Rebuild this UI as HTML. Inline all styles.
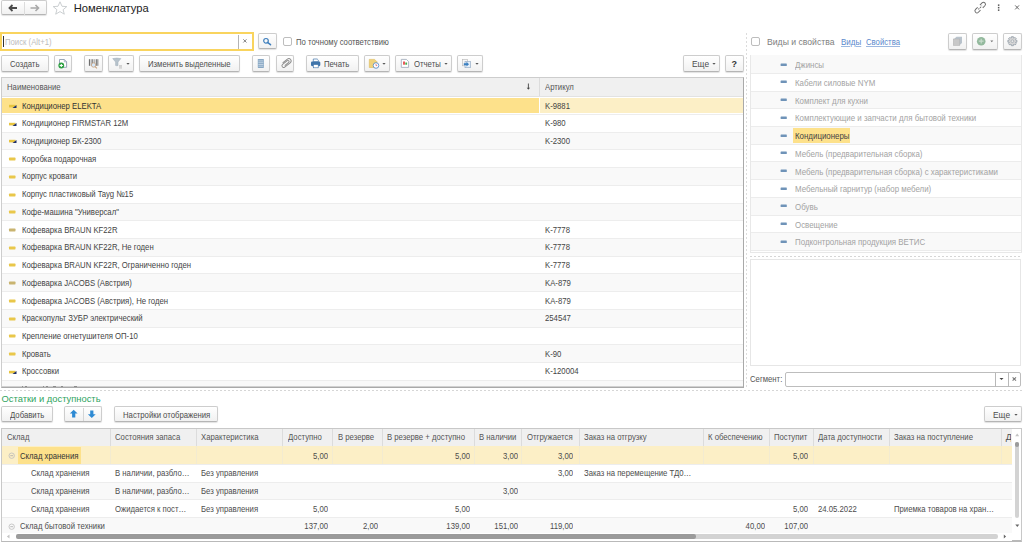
<!DOCTYPE html><html><head><meta charset="utf-8"><style>
html,body{margin:0;padding:0;width:1024px;height:545px;overflow:hidden;background:#fff;font-family:"Liberation Sans", sans-serif;}
.t{position:absolute;white-space:nowrap;}
.b{position:absolute;}
svg{position:absolute;overflow:visible;}
</style></head><body>
<div class="b" style="left:0.9px;top:-0.09999999999999998px;width:45.7px;height:15.1px;box-sizing:border-box;border:1px solid #cdcdcd;border-bottom-color:#b5b5b5;border-radius:2px;background:linear-gradient(#ffffff,#f1f1f1);box-shadow:0 1px 1px rgba(0,0,0,0.12);"></div>
<div class="b" style="left:24px;top:1.5px;width:1px;height:13px;background:#dcdcdc;"></div>
<svg style="left:0;top:0" width="60" height="16"><path d="M9.5 8 L17 8 M12.5 5 L9.5 8 L12.5 11" stroke="#4a4a4a" stroke-width="1.8" fill="none"/><path d="M30.5 8 L38.5 8 M35.5 5 L38.5 8 L35.5 11" stroke="#a8a8a8" stroke-width="1.6" fill="none"/><path d="M60 1.8 L62.0 6.3 L66.8 6.6 L63.1 9.7 L64.3 14.2 L60 11.6 L55.7 14.2 L56.9 9.7 L53.2 6.6 L58.0 6.3 Z" stroke="#c5c9cc" stroke-width="0.9" fill="none" transform="translate(0,0)"/></svg>
<div class="t" style="left:73.7px;top:2.12px;font-size:11.2px;color:#222;letter-spacing:0px;line-height:12px;">Номенклатура</div>
<svg style="left:970px;top:0" width="54" height="16"><g transform="rotate(-45 10.2 7.6)" fill="none" stroke="#6e6e6e" stroke-width="1"><path d="M8.6 5.6 L5.6 5.6 a2 2 0 0 0 0 4 L8.6 9.6"/><path d="M11.8 5.6 L14.8 5.6 a2 2 0 0 1 0 4 L11.8 9.6"/><path d="M7.6 7.6 L12.8 7.6" stroke-dasharray="1.4 0.9"/></g><rect x="27.9" y="4.4" width="1.5" height="1.5" fill="#555"/><rect x="27.9" y="6.9" width="1.5" height="1.5" fill="#555"/><rect x="27.9" y="9.4" width="1.5" height="1.5" fill="#555"/><path d="M45.2 5.4 L49 9.4 M49 5.4 L45.2 9.4" stroke="#6a6a6a" stroke-width="1"/></svg>
<div class="b" style="left:0px;top:32px;width:254px;height:19px;box-sizing:border-box;border:2px solid #f9d45e;background:#fff;"></div>
<div class="b" style="left:3px;top:36px;width:1px;height:11px;background:#333;"></div>
<div class="t" style="left:5px;top:35.88px;font-size:9px;color:#bdbdbd;letter-spacing:0px;line-height:12px;transform:scaleX(0.86);transform-origin:0 0;">Поиск (Alt+1)</div>
<div class="b" style="left:238px;top:35px;width:1px;height:14px;background:#b4b4b4;"></div>
<svg style="left:240px;top:36px" width="10" height="10"><path d="M3.3 3.3 L6.5 6.5 M6.5 3.3 L3.3 6.5" stroke="#777" stroke-width="0.9"/></svg>
<div class="b" style="left:257.7px;top:32.9px;width:18.900000000000034px;height:16.6px;box-sizing:border-box;border:1px solid #cdcdcd;border-bottom-color:#b5b5b5;border-radius:2px;background:linear-gradient(#ffffff,#f1f1f1);box-shadow:0 1px 1px rgba(0,0,0,0.12);"></div>
<svg style="left:258px;top:33px" width="18" height="16"><circle cx="8" cy="7.8" r="2.3" stroke="#3f7fbd" stroke-width="1.2" fill="none"/><path d="M9.8 9.6 L12.5 11.7" stroke="#3f7fbd" stroke-width="1.5" stroke-linecap="round"/></svg>
<div class="b" style="left:283px;top:37.4px;width:9px;height:9px;box-sizing:border-box;border:1px solid #bdbdbd;border-radius:2px;background:#fff;"></div>
<div class="t" style="left:296.2px;top:35.88px;font-size:9px;color:#555;letter-spacing:0px;line-height:12px;transform:scaleX(0.86);transform-origin:0 0;">По точному соответствию</div>
<div class="b" style="left:0.9px;top:54.9px;width:47.7px;height:16.699999999999996px;box-sizing:border-box;border:1px solid #cdcdcd;border-bottom-color:#b5b5b5;border-radius:2px;background:linear-gradient(#ffffff,#f1f1f1);box-shadow:0 1px 1px rgba(0,0,0,0.12);"></div>
<div class="t" style="left:9.5px;top:57.78px;font-size:9px;color:#4d4d4d;letter-spacing:0px;line-height:12px;transform:scaleX(0.86);transform-origin:0 0;">Создать</div>
<div class="b" style="left:53.699999999999996px;top:54.9px;width:18.699999999999996px;height:16.699999999999996px;box-sizing:border-box;border:1px solid #cdcdcd;border-bottom-color:#b5b5b5;border-radius:2px;background:linear-gradient(#ffffff,#f1f1f1);box-shadow:0 1px 1px rgba(0,0,0,0.12);"></div>
<div class="b" style="left:83.9px;top:54.9px;width:19.299999999999983px;height:16.699999999999996px;box-sizing:border-box;border:1px solid #cdcdcd;border-bottom-color:#b5b5b5;border-radius:2px;background:linear-gradient(#ffffff,#f1f1f1);box-shadow:0 1px 1px rgba(0,0,0,0.12);"></div>
<div class="b" style="left:107.80000000000001px;top:54.9px;width:26.19999999999999px;height:16.699999999999996px;box-sizing:border-box;border:1px solid #cdcdcd;border-bottom-color:#b5b5b5;border-radius:2px;background:linear-gradient(#ffffff,#f1f1f1);box-shadow:0 1px 1px rgba(0,0,0,0.12);"></div>
<div class="b" style="left:138.6px;top:54.9px;width:101.4px;height:16.699999999999996px;box-sizing:border-box;border:1px solid #cdcdcd;border-bottom-color:#b5b5b5;border-radius:2px;background:linear-gradient(#ffffff,#f1f1f1);box-shadow:0 1px 1px rgba(0,0,0,0.12);"></div>
<div class="t" style="left:147.8px;top:57.78px;font-size:9px;color:#4d4d4d;letter-spacing:0px;line-height:12px;transform:scaleX(0.86);transform-origin:0 0;">Изменить выделенные</div>
<div class="b" style="left:251.5px;top:54.9px;width:18.80000000000001px;height:16.699999999999996px;box-sizing:border-box;border:1px solid #cdcdcd;border-bottom-color:#b5b5b5;border-radius:2px;background:linear-gradient(#ffffff,#f1f1f1);box-shadow:0 1px 1px rgba(0,0,0,0.12);"></div>
<div class="b" style="left:275.9px;top:54.9px;width:18.300000000000068px;height:16.699999999999996px;box-sizing:border-box;border:1px solid #cdcdcd;border-bottom-color:#b5b5b5;border-radius:2px;background:linear-gradient(#ffffff,#f1f1f1);box-shadow:0 1px 1px rgba(0,0,0,0.12);"></div>
<div class="b" style="left:305.7px;top:54.9px;width:53.200000000000045px;height:16.699999999999996px;box-sizing:border-box;border:1px solid #cdcdcd;border-bottom-color:#b5b5b5;border-radius:2px;background:linear-gradient(#ffffff,#f1f1f1);box-shadow:0 1px 1px rgba(0,0,0,0.12);"></div>
<div class="t" style="left:324px;top:57.78px;font-size:9px;color:#4d4d4d;letter-spacing:0px;line-height:12px;transform:scaleX(0.86);transform-origin:0 0;">Печать</div>
<div class="b" style="left:364.0px;top:54.9px;width:26.100000000000023px;height:16.699999999999996px;box-sizing:border-box;border:1px solid #cdcdcd;border-bottom-color:#b5b5b5;border-radius:2px;background:linear-gradient(#ffffff,#f1f1f1);box-shadow:0 1px 1px rgba(0,0,0,0.12);"></div>
<div class="b" style="left:395.0px;top:54.9px;width:56.900000000000034px;height:16.699999999999996px;box-sizing:border-box;border:1px solid #cdcdcd;border-bottom-color:#b5b5b5;border-radius:2px;background:linear-gradient(#ffffff,#f1f1f1);box-shadow:0 1px 1px rgba(0,0,0,0.12);"></div>
<div class="t" style="left:414px;top:57.78px;font-size:9px;color:#4d4d4d;letter-spacing:0px;line-height:12px;transform:scaleX(0.86);transform-origin:0 0;">Отчеты</div>
<div class="b" style="left:456.5px;top:54.9px;width:26.400000000000034px;height:16.699999999999996px;box-sizing:border-box;border:1px solid #cdcdcd;border-bottom-color:#b5b5b5;border-radius:2px;background:linear-gradient(#ffffff,#f1f1f1);box-shadow:0 1px 1px rgba(0,0,0,0.12);"></div>
<div class="b" style="left:682.6px;top:54.9px;width:37.799999999999955px;height:16.699999999999996px;box-sizing:border-box;border:1px solid #cdcdcd;border-bottom-color:#b5b5b5;border-radius:2px;background:linear-gradient(#ffffff,#f1f1f1);box-shadow:0 1px 1px rgba(0,0,0,0.12);"></div>
<div class="t" style="left:691.8px;top:57.78px;font-size:9px;color:#4d4d4d;letter-spacing:0px;line-height:12px;transform:scaleX(0.93);transform-origin:0 0;">Еще</div>
<div class="b" style="left:725.1px;top:54.9px;width:19.100000000000023px;height:16.699999999999996px;box-sizing:border-box;border:1px solid #cdcdcd;border-bottom-color:#b5b5b5;border-radius:2px;background:linear-gradient(#ffffff,#f1f1f1);box-shadow:0 1px 1px rgba(0,0,0,0.12);"></div>
<div class="t" style="left:731.5px;top:57.88px;font-size:9px;color:#333;letter-spacing:0px;line-height:12px;font-weight:bold;">?</div>
<svg style="left:124.6px;top:62.2px" width="6" height="4"><path d="M1.4 1.1 L4.6 1.1 L3 2.8 Z" fill="#555"/></svg>
<svg style="left:380.6px;top:62.2px" width="6" height="4"><path d="M1.4 1.1 L4.6 1.1 L3 2.8 Z" fill="#555"/></svg>
<svg style="left:442.7px;top:62.2px" width="6" height="4"><path d="M1.4 1.1 L4.6 1.1 L3 2.8 Z" fill="#555"/></svg>
<svg style="left:473.7px;top:62.2px" width="6" height="4"><path d="M1.4 1.1 L4.6 1.1 L3 2.8 Z" fill="#555"/></svg>
<svg style="left:711.2px;top:62.2px" width="6" height="4"><path d="M1.4 1.1 L4.6 1.1 L3 2.8 Z" fill="#555"/></svg>
<svg style="left:0;top:55px" width="500" height="17"><path d="M59.5 4.5 L64.3 4.5 L66.6 6.8 L66.6 12.3 L59.5 12.3 Z" fill="#fff" stroke="#8d9cb0" stroke-width="0.9"/><path d="M64.3 4.5 L64.3 6.8 L66.6 6.8" fill="none" stroke="#8d9cb0" stroke-width="0.7"/><circle cx="61.3" cy="10.5" r="2.9" fill="#2ea043"/><path d="M61.3 8.9 L61.3 12.1 M59.7 10.5 L62.9 10.5" stroke="#fff" stroke-width="1.1"/><rect x="88.9" y="4.2" width="1.3" height="6.6" fill="#6f6f6f"/><rect x="90.9" y="4.2" width="0.7" height="6.6" fill="#8a8a8a"/><rect x="92.2" y="4.2" width="1.1" height="4.6" fill="#777"/><rect x="94.4" y="4.2" width="0.7" height="4.2" fill="#8a8a8a"/><rect x="95.8" y="4.2" width="1.1" height="6.6" fill="#777"/><rect x="97.4" y="4.2" width="0.9" height="6.6" fill="#6f6f6f"/><circle cx="93.6" cy="10" r="2.2" fill="#d5e8fb" stroke="#c9a17a" stroke-width="0.8"/><path d="M95.1 11.6 L96.9 13.4" stroke="#c9a17a" stroke-width="1.1"/><path d="M112.7 3.6 Q116.8 2.6 120.9 3.6 L118 7 L118 10.5 Q116.8 11 115.6 10.5 L115.6 7 Z" fill="#b7c3cc" stroke="#9fadb8" stroke-width="0.5"/><rect x="119" y="10" width="3" height="3.6" fill="#cfcfcf"/><path d="M119 11.2 H122 M119 12.4 H122" stroke="#e4e4e4" stroke-width="0.4"/><rect x="257.8" y="4" width="6.1" height="8.9" rx="0.6" fill="#86a6c3"/><path d="M258.3 5.9 H263.4 M258.3 7.7 H263.4 M258.3 9.5 H263.4 M258.3 11.2 H263.4" stroke="#e4edf5" stroke-width="0.6"/><g transform="rotate(-38 285.8 8.3)"><path d="M283.6 9.4 L288.6 9.4 a1.1 1.1 0 0 0 0 -2.2 L282.6 7.2 a1.7 1.7 0 0 0 0 3.4 L289.6 10.6 a2.3 2.3 0 0 0 0 -4.6 L283.6 6" fill="none" stroke="#8c8c8c" stroke-width="0.95"/></g><path d="M313.3 4 L317.2 4 L318.3 5.1 L318.3 6.8 L313.3 6.8 Z" fill="#fff" stroke="#3f74aa" stroke-width="0.7"/><rect x="311" y="6.6" width="9.3" height="4.6" rx="1.1" fill="#3f74aa"/><rect x="313.3" y="9.6" width="4.9" height="3.2" fill="#fff" stroke="#3f74aa" stroke-width="0.6"/><path d="M369.3 4.4 L374.6 4.4 L377 6.8 L377 12.5 L369.3 12.5 Z" fill="#efd27a" stroke="#dcb95a" stroke-width="0.6"/><circle cx="376" cy="10.5" r="2.8" fill="#fff" stroke="#5c8fc8" stroke-width="0.9"/><path d="M376 9 V10.6 H377.2" stroke="#d04040" stroke-width="0.6" fill="none"/><path d="M401.3 4.4 L406.4 4.4 L408.6 6.6 L408.6 12.4 L401.3 12.4 Z" fill="#fff" stroke="#9aa6b6" stroke-width="0.8"/><rect x="403" y="6.5" width="2" height="3.2" fill="#e85a5a"/><rect x="405.3" y="7.5" width="1.8" height="2.2" fill="#47b04b"/><rect x="462.3" y="4.5" width="5" height="6.3" fill="#f7f7f7" stroke="#b5b5b5" stroke-width="0.6"/><rect x="465" y="6.6" width="5.6" height="6.1" fill="#e4eef8" stroke="#8aa3bf" stroke-width="0.6"/><path d="M463.8 8.2 L466.5 8.2 L466.5 6.8 L469 9.2 L466.5 11.6 L466.5 10.2 L463.8 10.2 Z" fill="#3a7fc0"/></svg>
<div class="b" style="left:1px;top:77px;width:743px;height:310px;box-sizing:border-box;border:1px solid #c3c3c3;border-right-color:#a9a9a9;border-bottom-color:#a9a9a9;background:#fff;overflow:hidden;"></div>
<div class="b" style="left:2px;top:78px;width:741px;height:18.6px;background:#f0f0f0;border-bottom:1px solid #e2e2e2;box-sizing:border-box;"></div>
<div class="b" style="left:539px;top:78px;width:1px;height:18px;background:#dcdcdc;"></div>
<div class="t" style="left:7px;top:80.68px;font-size:9px;color:#555;letter-spacing:0px;line-height:12px;transform:scaleX(0.86);transform-origin:0 0;">Наименование</div>
<svg style="left:524px;top:82px" width="9" height="9"><path d="M4.4 1.5 L4.4 7.2" stroke="#444" stroke-width="0.9"/><path d="M2.7 5.8 L6.1 5.8 L4.4 7.6 Z" fill="#444"/></svg>
<div class="t" style="left:545px;top:80.68px;font-size:9px;color:#555;letter-spacing:0px;line-height:12px;transform:scaleX(0.86);transform-origin:0 0;">Артикул</div>
<div class="b" style="left:0;top:0;width:1024px;height:545px;clip-path:inset(96px 280px 158.4px 2px)">
<div class="b" style="left:2px;top:97.7px;width:537px;height:15.719999999999999px;background:#fde18b;"></div>
<div class="b" style="left:540px;top:97.7px;width:203px;height:15.719999999999999px;background:#fcefc6;"></div>
<div class="b" style="left:2px;top:113.92px;width:741px;height:1px;background:#ededed;z-index:1;"></div>
<div class="t" style="left:22px;top:99.58px;font-size:9px;color:#333;letter-spacing:0px;line-height:12px;transform:scaleX(0.86);transform-origin:0 0;">Кондиционер ELEKTA</div>
<div class="t" style="left:545px;top:99.58px;font-size:9px;color:#444;letter-spacing:0px;line-height:12px;transform:scaleX(0.86);transform-origin:0 0;">K-9881</div>
<svg style="left:8px;top:102.90px" width="10" height="6"><rect x="1" y="1.8" width="6.5" height="2.6" fill="#e7c43f"/><path d="M4.5 5 L8.5 2 L8.5 5 Z" fill="#1e2f6a"/></svg>
<div class="b" style="left:2px;top:114.12px;width:741px;height:17.72px;background:#ffffff;"></div>
<div class="b" style="left:2px;top:131.64000000000001px;width:741px;height:1px;background:#ededed;z-index:1;"></div>
<div class="t" style="left:22px;top:117.30px;font-size:9px;color:#444;letter-spacing:0px;line-height:12px;transform:scaleX(0.86);transform-origin:0 0;">Кондиционер FIRMSTAR 12M</div>
<div class="t" style="left:545px;top:117.30px;font-size:9px;color:#444;letter-spacing:0px;line-height:12px;transform:scaleX(0.86);transform-origin:0 0;">K-980</div>
<svg style="left:8px;top:120.62px" width="10" height="6"><rect x="1" y="1.8" width="6.5" height="2.6" fill="#e7c43f"/><path d="M4.5 5 L8.5 2 L8.5 5 Z" fill="#1e2f6a"/></svg>
<div class="b" style="left:2px;top:131.84px;width:741px;height:17.72px;background:#f9f9f9;"></div>
<div class="b" style="left:2px;top:149.36px;width:741px;height:1px;background:#ededed;z-index:1;"></div>
<div class="t" style="left:22px;top:135.02px;font-size:9px;color:#444;letter-spacing:0px;line-height:12px;transform:scaleX(0.86);transform-origin:0 0;">Кондиционер БК-2300</div>
<div class="t" style="left:545px;top:135.02px;font-size:9px;color:#444;letter-spacing:0px;line-height:12px;transform:scaleX(0.86);transform-origin:0 0;">K-2300</div>
<svg style="left:8px;top:138.34px" width="10" height="6"><rect x="1" y="1.8" width="6.5" height="2.6" fill="#e7c43f"/><path d="M4.5 5 L8.5 2 L8.5 5 Z" fill="#1e2f6a"/></svg>
<div class="b" style="left:2px;top:149.56px;width:741px;height:17.72px;background:#ffffff;"></div>
<div class="b" style="left:2px;top:167.08px;width:741px;height:1px;background:#ededed;z-index:1;"></div>
<div class="t" style="left:22px;top:152.74px;font-size:9px;color:#444;letter-spacing:0px;line-height:12px;transform:scaleX(0.86);transform-origin:0 0;">Коробка подарочная</div>
<svg style="left:8px;top:156.06px" width="10" height="6"><rect x="1" y="1.6" width="6.5" height="2.8" rx="0.6" fill="#e9c74a"/></svg>
<div class="b" style="left:2px;top:167.28px;width:741px;height:17.72px;background:#f9f9f9;"></div>
<div class="b" style="left:2px;top:184.8px;width:741px;height:1px;background:#ededed;z-index:1;"></div>
<div class="t" style="left:22px;top:170.46px;font-size:9px;color:#444;letter-spacing:0px;line-height:12px;transform:scaleX(0.86);transform-origin:0 0;">Корпус кровати</div>
<svg style="left:8px;top:173.78px" width="10" height="6"><rect x="1" y="1.6" width="6.5" height="2.8" rx="0.6" fill="#e9c74a"/></svg>
<div class="b" style="left:2px;top:185.0px;width:741px;height:17.72px;background:#ffffff;"></div>
<div class="b" style="left:2px;top:202.52px;width:741px;height:1px;background:#ededed;z-index:1;"></div>
<div class="t" style="left:22px;top:188.18px;font-size:9px;color:#444;letter-spacing:0px;line-height:12px;transform:scaleX(0.86);transform-origin:0 0;">Корпус пластиковый Tayg №15</div>
<svg style="left:8px;top:191.50px" width="10" height="6"><rect x="1" y="1.6" width="6.5" height="2.8" rx="0.6" fill="#e9c74a"/></svg>
<div class="b" style="left:2px;top:202.72px;width:741px;height:17.72px;background:#f9f9f9;"></div>
<div class="b" style="left:2px;top:220.24px;width:741px;height:1px;background:#ededed;z-index:1;"></div>
<div class="t" style="left:22px;top:205.90px;font-size:9px;color:#444;letter-spacing:0px;line-height:12px;transform:scaleX(0.86);transform-origin:0 0;">Кофе-машина "Универсал"</div>
<svg style="left:8px;top:209.22px" width="10" height="6"><rect x="1" y="1.6" width="6.5" height="2.8" rx="0.6" fill="#e9c74a"/></svg>
<div class="b" style="left:2px;top:220.44px;width:741px;height:17.72px;background:#ffffff;"></div>
<div class="b" style="left:2px;top:237.96px;width:741px;height:1px;background:#ededed;z-index:1;"></div>
<div class="t" style="left:22px;top:223.62px;font-size:9px;color:#444;letter-spacing:0px;line-height:12px;transform:scaleX(0.86);transform-origin:0 0;">Кофеварка BRAUN KF22R</div>
<div class="t" style="left:545px;top:223.62px;font-size:9px;color:#444;letter-spacing:0px;line-height:12px;transform:scaleX(0.86);transform-origin:0 0;">K-7778</div>
<svg style="left:8px;top:226.94px" width="10" height="6"><rect x="1" y="1.6" width="6.5" height="2.8" rx="0.6" fill="#c9b470"/></svg>
<div class="b" style="left:2px;top:238.16px;width:741px;height:17.72px;background:#f9f9f9;"></div>
<div class="b" style="left:2px;top:255.68px;width:741px;height:1px;background:#ededed;z-index:1;"></div>
<div class="t" style="left:22px;top:241.34px;font-size:9px;color:#444;letter-spacing:0px;line-height:12px;transform:scaleX(0.86);transform-origin:0 0;">Кофеварка BRAUN KF22R, Не годен</div>
<div class="t" style="left:545px;top:241.34px;font-size:9px;color:#444;letter-spacing:0px;line-height:12px;transform:scaleX(0.86);transform-origin:0 0;">K-7778</div>
<svg style="left:8px;top:244.66px" width="10" height="6"><rect x="1" y="1.6" width="6.5" height="2.8" rx="0.6" fill="#e9c74a"/></svg>
<div class="b" style="left:2px;top:255.88px;width:741px;height:17.72px;background:#ffffff;"></div>
<div class="b" style="left:2px;top:273.40000000000003px;width:741px;height:1px;background:#ededed;z-index:1;"></div>
<div class="t" style="left:22px;top:259.06px;font-size:9px;color:#444;letter-spacing:0px;line-height:12px;transform:scaleX(0.86);transform-origin:0 0;">Кофеварка BRAUN KF22R, Ограниченно годен</div>
<div class="t" style="left:545px;top:259.06px;font-size:9px;color:#444;letter-spacing:0px;line-height:12px;transform:scaleX(0.86);transform-origin:0 0;">K-7778</div>
<svg style="left:8px;top:262.38px" width="10" height="6"><rect x="1" y="1.6" width="6.5" height="2.8" rx="0.6" fill="#e9c74a"/></svg>
<div class="b" style="left:2px;top:273.6px;width:741px;height:17.72px;background:#f9f9f9;"></div>
<div class="b" style="left:2px;top:291.12000000000006px;width:741px;height:1px;background:#ededed;z-index:1;"></div>
<div class="t" style="left:22px;top:276.78px;font-size:9px;color:#444;letter-spacing:0px;line-height:12px;transform:scaleX(0.86);transform-origin:0 0;">Кофеварка JACOBS (Австрия)</div>
<div class="t" style="left:545px;top:276.78px;font-size:9px;color:#444;letter-spacing:0px;line-height:12px;transform:scaleX(0.86);transform-origin:0 0;">KA-879</div>
<svg style="left:8px;top:280.10px" width="10" height="6"><rect x="1" y="1.6" width="6.5" height="2.8" rx="0.6" fill="#c9b470"/></svg>
<div class="b" style="left:2px;top:291.32px;width:741px;height:17.72px;background:#ffffff;"></div>
<div class="b" style="left:2px;top:308.84px;width:741px;height:1px;background:#ededed;z-index:1;"></div>
<div class="t" style="left:22px;top:294.50px;font-size:9px;color:#444;letter-spacing:0px;line-height:12px;transform:scaleX(0.86);transform-origin:0 0;">Кофеварка JACOBS (Австрия), Не годен</div>
<div class="t" style="left:545px;top:294.50px;font-size:9px;color:#444;letter-spacing:0px;line-height:12px;transform:scaleX(0.86);transform-origin:0 0;">KA-879</div>
<svg style="left:8px;top:297.82px" width="10" height="6"><rect x="1" y="1.6" width="6.5" height="2.8" rx="0.6" fill="#e9c74a"/></svg>
<div class="b" style="left:2px;top:309.03999999999996px;width:741px;height:17.72px;background:#f9f9f9;"></div>
<div class="b" style="left:2px;top:326.56px;width:741px;height:1px;background:#ededed;z-index:1;"></div>
<div class="t" style="left:22px;top:312.22px;font-size:9px;color:#444;letter-spacing:0px;line-height:12px;transform:scaleX(0.86);transform-origin:0 0;">Краскопульт ЗУБР электрический</div>
<div class="t" style="left:545px;top:312.22px;font-size:9px;color:#444;letter-spacing:0px;line-height:12px;transform:scaleX(0.86);transform-origin:0 0;">254547</div>
<svg style="left:8px;top:315.54px" width="10" height="6"><rect x="1" y="1.6" width="6.5" height="2.8" rx="0.6" fill="#e9c74a"/></svg>
<div class="b" style="left:2px;top:326.76px;width:741px;height:17.72px;background:#ffffff;"></div>
<div class="b" style="left:2px;top:344.28000000000003px;width:741px;height:1px;background:#ededed;z-index:1;"></div>
<div class="t" style="left:22px;top:329.94px;font-size:9px;color:#444;letter-spacing:0px;line-height:12px;transform:scaleX(0.86);transform-origin:0 0;">Крепление огнетушителя ОП-10</div>
<svg style="left:8px;top:333.26px" width="10" height="6"><rect x="1" y="1.6" width="6.5" height="2.8" rx="0.6" fill="#e9c74a"/></svg>
<div class="b" style="left:2px;top:344.48px;width:741px;height:17.72px;background:#f9f9f9;"></div>
<div class="b" style="left:2px;top:362.00000000000006px;width:741px;height:1px;background:#ededed;z-index:1;"></div>
<div class="t" style="left:22px;top:347.66px;font-size:9px;color:#444;letter-spacing:0px;line-height:12px;transform:scaleX(0.86);transform-origin:0 0;">Кровать</div>
<div class="t" style="left:545px;top:347.66px;font-size:9px;color:#444;letter-spacing:0px;line-height:12px;transform:scaleX(0.86);transform-origin:0 0;">K-90</div>
<svg style="left:8px;top:350.98px" width="10" height="6"><rect x="1" y="1.6" width="6.5" height="2.8" rx="0.6" fill="#e9c74a"/></svg>
<div class="b" style="left:2px;top:362.19999999999993px;width:741px;height:17.72px;background:#ffffff;"></div>
<div class="b" style="left:2px;top:379.71999999999997px;width:741px;height:1px;background:#ededed;z-index:1;"></div>
<div class="t" style="left:22px;top:365.38px;font-size:9px;color:#444;letter-spacing:0px;line-height:12px;transform:scaleX(0.86);transform-origin:0 0;">Кроссовки</div>
<div class="t" style="left:545px;top:365.38px;font-size:9px;color:#444;letter-spacing:0px;line-height:12px;transform:scaleX(0.86);transform-origin:0 0;">K-120004</div>
<svg style="left:8px;top:368.70px" width="10" height="6"><rect x="1" y="1.8" width="6.5" height="2.6" fill="#e7c43f"/><path d="M4.5 5 L8.5 2 L8.5 5 Z" fill="#1e2f6a"/></svg>
<div class="b" style="left:2px;top:379.91999999999996px;width:741px;height:17.72px;background:#f9f9f9;"></div>
<div class="b" style="left:2px;top:397.44px;width:741px;height:1px;background:#ededed;z-index:1;"></div>
<svg style="left:8px;top:386.42px" width="10" height="6"><rect x="1" y="1.6" width="6.5" height="2.8" rx="0.6" fill="#e9c74a"/></svg>
<div class="b" style="left:21.8px;top:385.5px;width:1.2px;height:1.2px;background:#4a4a4a;"></div>
<div class="b" style="left:24.6px;top:385.5px;width:2px;height:1.2px;background:#4a4a4a;"></div>
<div class="b" style="left:42.5px;top:385.5px;width:1.2px;height:1.2px;background:#4a4a4a;"></div>
<div class="b" style="left:45.8px;top:385.5px;width:2.6px;height:1.2px;background:#4a4a4a;"></div>
<div class="b" style="left:53.2px;top:385.5px;width:2.6px;height:1.2px;background:#4a4a4a;"></div>
<div class="b" style="left:61px;top:385.5px;width:2.4px;height:1.2px;background:#4a4a4a;"></div>
<div class="b" style="left:74.3px;top:385.5px;width:2.6px;height:1.2px;background:#4a4a4a;"></div>
</div>
<div class="b" style="left:1px;top:77px;width:743px;height:310.6px;box-sizing:border-box;border:1px solid #cdcdcd;border-right-color:#a9a9a9;border-bottom-color:#a9a9a9;"></div>
<div class="b" style="left:746px;top:33px;width:1px;height:354px;background:repeating-linear-gradient(180deg,#dcdcdc 0 2px,transparent 2px 4px);"></div>
<div class="b" style="left:0;top:390px;width:1024px;height:1px;background:repeating-linear-gradient(90deg,#d6d6d6 0 2px,transparent 2px 4px);"></div>
<div class="b" style="left:750.8px;top:37.3px;width:9px;height:9px;box-sizing:border-box;border:1px solid #bdbdbd;border-radius:2px;background:#fff;"></div>
<div class="t" style="left:767.4px;top:35.68px;font-size:9px;color:#808080;letter-spacing:0px;line-height:12px;transform:scaleX(0.96);transform-origin:0 0;">Виды и свойства</div>
<div class="t" style="left:840.6px;top:35.68px;font-size:9px;color:#5a88cc;letter-spacing:0px;line-height:12px;transform:scaleX(0.89);transform-origin:0 0;text-decoration:underline;text-decoration-color:#9db8e0;">Виды</div>
<div class="t" style="left:865.9px;top:35.68px;font-size:9px;color:#5a88cc;letter-spacing:0px;line-height:12px;transform:scaleX(0.86);transform-origin:0 0;text-decoration:underline;text-decoration-color:#9db8e0;">Свойства</div>
<div class="b" style="left:947.8px;top:33.199999999999996px;width:19.200000000000045px;height:17.000000000000007px;box-sizing:border-box;border:1px solid #cdcdcd;border-bottom-color:#b5b5b5;border-radius:2px;background:linear-gradient(#ffffff,#f1f1f1);box-shadow:0 1px 1px rgba(0,0,0,0.12);"></div>
<div class="b" style="left:971.6999999999999px;top:33.199999999999996px;width:26.300000000000068px;height:17.000000000000007px;box-sizing:border-box;border:1px solid #cdcdcd;border-bottom-color:#b5b5b5;border-radius:2px;background:linear-gradient(#ffffff,#f1f1f1);box-shadow:0 1px 1px rgba(0,0,0,0.12);"></div>
<div class="b" style="left:1002.9px;top:33.199999999999996px;width:19.100000000000023px;height:17.000000000000007px;box-sizing:border-box;border:1px solid #cdcdcd;border-bottom-color:#b5b5b5;border-radius:2px;background:linear-gradient(#ffffff,#f1f1f1);box-shadow:0 1px 1px rgba(0,0,0,0.12);"></div>
<svg style="left:948px;top:33px" width="74" height="16"><path d="M6 6 L8.5 3.8 L14 3.8 L14 10 L11.5 12.3 Z" fill="#b9c3cc"/><rect x="5.3" y="6" width="6.5" height="6.5" fill="#c8c8c8" stroke="#b0b0b0" stroke-width="0.5"/><circle cx="33.2" cy="8.2" r="4.3" fill="#93b99d"/><path d="M33.2 5.8 L33.2 10.6 M30.8 8.2 L35.6 8.2" stroke="#c9dccd" stroke-width="1.2"/><path d="M42.3 7.5 L45.3 7.5 L43.8 9.2 Z" fill="#777"/><path d="M63.40 3.71 L65.40 3.71 L65.34 4.83 L66.12 5.15 L66.86 4.32 L68.28 5.74 L67.45 6.48 L67.77 7.26 L68.89 7.20 L68.89 9.20 L67.77 9.14 L67.45 9.92 L68.28 10.66 L66.86 12.08 L66.12 11.25 L65.34 11.57 L65.40 12.69 L63.40 12.69 L63.46 11.57 L62.68 11.25 L61.94 12.08 L60.52 10.66 L61.35 9.92 L61.03 9.14 L59.91 9.20 L59.91 7.20 L61.03 7.26 L61.35 6.48 L60.52 5.74 L61.94 4.32 L62.68 5.15 L63.46 4.83 Z" fill="#d6d6d6" stroke="#a0a9b2" stroke-width="1" stroke-linejoin="round"/><circle cx="64.4" cy="8.2" r="1.4" fill="#e8e8e8" stroke="#a3abb3" stroke-width="0.8"/></svg>
<div class="b" style="left:750.3px;top:55.3px;width:271.30000000000007px;height:197.7px;box-sizing:border-box;border:1px solid #e8e8e8;background:#fff;"></div>
<div class="b" style="left:751.3px;top:55.3px;width:269.30000000000007px;height:17.72px;background:#f9f9f9;"></div>
<div class="b" style="left:751.3px;top:72.82px;width:269.30000000000007px;height:1px;background:#ececec;z-index:1;"></div>
<div class="t" style="left:795px;top:59.28px;font-size:9px;color:#a3a3a3;letter-spacing:0px;line-height:12px;transform:scaleX(0.878);transform-origin:0 0;">Джинсы</div>
<svg style="left:780px;top:62.70px" width="8" height="4"><rect x="0.6" y="0.6" width="6.2" height="2.4" rx="0.5" fill="#6f93b8"/></svg>
<div class="b" style="left:751.3px;top:90.53999999999999px;width:269.30000000000007px;height:1px;background:#ececec;z-index:1;"></div>
<div class="t" style="left:795px;top:77.00px;font-size:9px;color:#a3a3a3;letter-spacing:0px;line-height:12px;transform:scaleX(0.878);transform-origin:0 0;">Кабели силовые NYM</div>
<svg style="left:780px;top:80.42px" width="8" height="4"><rect x="0.6" y="0.6" width="6.2" height="2.4" rx="0.5" fill="#6f93b8"/></svg>
<div class="b" style="left:751.3px;top:90.74px;width:269.30000000000007px;height:17.72px;background:#f9f9f9;"></div>
<div class="b" style="left:751.3px;top:108.25999999999999px;width:269.30000000000007px;height:1px;background:#ececec;z-index:1;"></div>
<div class="t" style="left:795px;top:94.72px;font-size:9px;color:#a3a3a3;letter-spacing:0px;line-height:12px;transform:scaleX(0.878);transform-origin:0 0;">Комплект для кухни</div>
<svg style="left:780px;top:98.14px" width="8" height="4"><rect x="0.6" y="0.6" width="6.2" height="2.4" rx="0.5" fill="#6f93b8"/></svg>
<div class="b" style="left:751.3px;top:125.97999999999999px;width:269.30000000000007px;height:1px;background:#ececec;z-index:1;"></div>
<div class="t" style="left:795px;top:112.44px;font-size:9px;color:#a3a3a3;letter-spacing:0px;line-height:12px;transform:scaleX(0.878);transform-origin:0 0;">Комплектующие и запчасти для бытовой техники</div>
<svg style="left:780px;top:115.86px" width="8" height="4"><rect x="0.6" y="0.6" width="6.2" height="2.4" rx="0.5" fill="#6f93b8"/></svg>
<div class="b" style="left:751.3px;top:126.17999999999999px;width:269.30000000000007px;height:17.72px;background:#f9f9f9;"></div>
<div class="b" style="left:751.3px;top:143.7px;width:269.30000000000007px;height:1px;background:#ececec;z-index:1;"></div>
<div class="b" style="left:793.2px;top:127.58px;width:57px;height:15.4px;background:#fde18b;"></div>
<div class="b" style="left:793.2px;top:143.78px;width:57px;height:0.8px;background:#fde18b;"></div>
<div class="t" style="left:795px;top:130.16px;font-size:9px;color:#444;letter-spacing:0px;line-height:12px;transform:scaleX(0.878);transform-origin:0 0;">Кондиционеры</div>
<svg style="left:780px;top:133.58px" width="8" height="4"><rect x="0.6" y="0.6" width="6.2" height="2.4" rx="0.5" fill="#6f93b8"/></svg>
<div class="b" style="left:751.3px;top:161.42px;width:269.30000000000007px;height:1px;background:#ececec;z-index:1;"></div>
<div class="t" style="left:795px;top:147.88px;font-size:9px;color:#a3a3a3;letter-spacing:0px;line-height:12px;transform:scaleX(0.878);transform-origin:0 0;">Мебель (предварительная сборка)</div>
<svg style="left:780px;top:151.30px" width="8" height="4"><rect x="0.6" y="0.6" width="6.2" height="2.4" rx="0.5" fill="#6f93b8"/></svg>
<div class="b" style="left:751.3px;top:161.62px;width:269.30000000000007px;height:17.72px;background:#f9f9f9;"></div>
<div class="b" style="left:751.3px;top:179.14000000000001px;width:269.30000000000007px;height:1px;background:#ececec;z-index:1;"></div>
<div class="t" style="left:795px;top:165.60px;font-size:9px;color:#a3a3a3;letter-spacing:0px;line-height:12px;transform:scaleX(0.878);transform-origin:0 0;">Мебель (предварительная сборка) с характеристиками</div>
<svg style="left:780px;top:169.02px" width="8" height="4"><rect x="0.6" y="0.6" width="6.2" height="2.4" rx="0.5" fill="#6f93b8"/></svg>
<div class="b" style="left:751.3px;top:196.85999999999999px;width:269.30000000000007px;height:1px;background:#ececec;z-index:1;"></div>
<div class="t" style="left:795px;top:183.32px;font-size:9px;color:#a3a3a3;letter-spacing:0px;line-height:12px;transform:scaleX(0.878);transform-origin:0 0;">Мебельный гарнитур (набор мебели)</div>
<svg style="left:780px;top:186.74px" width="8" height="4"><rect x="0.6" y="0.6" width="6.2" height="2.4" rx="0.5" fill="#6f93b8"/></svg>
<div class="b" style="left:751.3px;top:197.06px;width:269.30000000000007px;height:17.72px;background:#f9f9f9;"></div>
<div class="b" style="left:751.3px;top:214.58px;width:269.30000000000007px;height:1px;background:#ececec;z-index:1;"></div>
<div class="t" style="left:795px;top:201.04px;font-size:9px;color:#a3a3a3;letter-spacing:0px;line-height:12px;transform:scaleX(0.878);transform-origin:0 0;">Обувь</div>
<svg style="left:780px;top:204.46px" width="8" height="4"><rect x="0.6" y="0.6" width="6.2" height="2.4" rx="0.5" fill="#6f93b8"/></svg>
<div class="b" style="left:751.3px;top:232.29999999999998px;width:269.30000000000007px;height:1px;background:#ececec;z-index:1;"></div>
<div class="t" style="left:795px;top:218.76px;font-size:9px;color:#a3a3a3;letter-spacing:0px;line-height:12px;transform:scaleX(0.878);transform-origin:0 0;">Освещение</div>
<svg style="left:780px;top:222.18px" width="8" height="4"><rect x="0.6" y="0.6" width="6.2" height="2.4" rx="0.5" fill="#6f93b8"/></svg>
<div class="b" style="left:751.3px;top:232.5px;width:269.30000000000007px;height:17.72px;background:#f9f9f9;"></div>
<div class="b" style="left:751.3px;top:250.02px;width:269.30000000000007px;height:1px;background:#ececec;z-index:1;"></div>
<div class="t" style="left:795px;top:236.48px;font-size:9px;color:#a3a3a3;letter-spacing:0px;line-height:12px;transform:scaleX(0.878);transform-origin:0 0;">Подконтрольная продукция ВЕТИС</div>
<svg style="left:780px;top:239.90px" width="8" height="4"><rect x="0.6" y="0.6" width="6.2" height="2.4" rx="0.5" fill="#6f93b8"/></svg>
<div class="b" style="left:750px;top:256px;width:272px;height:1px;background:repeating-linear-gradient(90deg,#d6d6d6 0 2px,transparent 2px 4px);"></div>
<div class="b" style="left:750.3px;top:259.4px;width:270.70000000000005px;height:106.80000000000001px;box-sizing:border-box;border:1px solid #e6e6e6;background:#fff;"></div>
<div class="t" style="left:750.3px;top:373.08px;font-size:9px;color:#555;letter-spacing:0px;line-height:12px;transform:scaleX(0.86);transform-origin:0 0;">Сегмент:</div>
<div class="b" style="left:785.4px;top:372.4px;width:236.0px;height:14.600000000000023px;box-sizing:border-box;border:1px solid #bdbdbd;border-radius:2px;background:#fff;"></div>
<div class="b" style="left:995px;top:373px;width:1px;height:13.5px;background:#b8b8b8;"></div>
<div class="b" style="left:1008px;top:373px;width:1px;height:13.5px;background:#b8b8b8;"></div>
<svg style="left:995px;top:372px" width="27" height="15"><path d="M4.5 6 L8.5 6 L6.5 8 Z" fill="#444"/><path d="M17.6 5.3 L21 8.7 M21 5.3 L17.6 8.7" stroke="#777" stroke-width="1.1"/></svg>
<div class="t" style="left:1.5px;top:393.04px;font-size:9.4px;color:#30a45e;letter-spacing:0px;line-height:12px;">Остатки и доступность</div>
<div class="b" style="left:0.9px;top:406.0px;width:51.900000000000006px;height:15.600000000000023px;box-sizing:border-box;border:1px solid #cdcdcd;border-bottom-color:#b5b5b5;border-radius:2px;background:linear-gradient(#ffffff,#f1f1f1);box-shadow:0 1px 1px rgba(0,0,0,0.12);"></div>
<div class="t" style="left:10px;top:408.58px;font-size:9px;color:#4d4d4d;letter-spacing:0px;line-height:12px;transform:scaleX(0.86);transform-origin:0 0;">Добавить</div>
<div class="b" style="left:64.4px;top:406.0px;width:37.599999999999994px;height:15.600000000000023px;box-sizing:border-box;border:1px solid #cdcdcd;border-bottom-color:#b5b5b5;border-radius:2px;background:linear-gradient(#ffffff,#f1f1f1);box-shadow:0 1px 1px rgba(0,0,0,0.12);"></div>
<div class="b" style="left:83.3px;top:407.5px;width:1px;height:13.5px;background:#d5d5d5;"></div>
<svg style="left:65px;top:406px" width="37" height="16"><path d="M73.5 0 Z"/><path d="M8.7 3.8 L12.6 7.6 L10.3 7.6 L10.3 11.4 L7.1 11.4 L7.1 7.6 L4.8 7.6 Z" fill="#2e8ad3"/><path d="M26.8 12 L30.7 8.2 L28.4 8.2 L28.4 4.4 L25.2 4.4 L25.2 8.2 L22.9 8.2 Z" fill="#2e8ad3"/></svg>
<div class="b" style="left:113.7px;top:406.0px;width:104.39999999999999px;height:15.600000000000023px;box-sizing:border-box;border:1px solid #cdcdcd;border-bottom-color:#b5b5b5;border-radius:2px;background:linear-gradient(#ffffff,#f1f1f1);box-shadow:0 1px 1px rgba(0,0,0,0.12);"></div>
<div class="t" style="left:122.5px;top:408.58px;font-size:9px;color:#4d4d4d;letter-spacing:0px;line-height:12px;transform:scaleX(0.86);transform-origin:0 0;">Настройки отображения</div>
<div class="b" style="left:984.0px;top:406.0px;width:38.0px;height:15.800000000000011px;box-sizing:border-box;border:1px solid #cdcdcd;border-bottom-color:#b5b5b5;border-radius:2px;background:linear-gradient(#ffffff,#f1f1f1);box-shadow:0 1px 1px rgba(0,0,0,0.12);"></div>
<div class="t" style="left:992.8px;top:408.58px;font-size:9px;color:#4d4d4d;letter-spacing:0px;line-height:12px;transform:scaleX(0.93);transform-origin:0 0;">Еще</div>
<svg style="left:1012.5px;top:413px" width="6" height="4"><path d="M1.4 1.1 L4.6 1.1 L3 2.8 Z" fill="#555"/></svg>
<div class="b" style="left:1px;top:427.5px;width:1021px;height:113.79999999999995px;box-sizing:border-box;border:1px solid #c8c8c8;border-bottom-color:#b9b9b9;background:#fff;"></div>
<div class="b" style="left:2px;top:428.5px;width:1010px;height:18.6px;background:#f0f0f0;border-bottom:1px solid #e2e2e2;box-sizing:border-box;"></div>
<div class="b" style="left:109.5px;top:428.5px;width:1px;height:18px;background:#dcdcdc;"></div>
<div class="b" style="left:195.5px;top:428.5px;width:1px;height:18px;background:#dcdcdc;"></div>
<div class="b" style="left:282.3px;top:428.5px;width:1px;height:18px;background:#dcdcdc;"></div>
<div class="b" style="left:332.3px;top:428.5px;width:1px;height:18px;background:#dcdcdc;"></div>
<div class="b" style="left:381.6px;top:428.5px;width:1px;height:18px;background:#dcdcdc;"></div>
<div class="b" style="left:474.2px;top:428.5px;width:1px;height:18px;background:#dcdcdc;"></div>
<div class="b" style="left:521px;top:428.5px;width:1px;height:18px;background:#dcdcdc;"></div>
<div class="b" style="left:578.5px;top:428.5px;width:1px;height:18px;background:#dcdcdc;"></div>
<div class="b" style="left:702.5px;top:428.5px;width:1px;height:18px;background:#dcdcdc;"></div>
<div class="b" style="left:768.5px;top:428.5px;width:1px;height:18px;background:#dcdcdc;"></div>
<div class="b" style="left:812.5px;top:428.5px;width:1px;height:18px;background:#dcdcdc;"></div>
<div class="b" style="left:888.6px;top:428.5px;width:1px;height:18px;background:#dcdcdc;"></div>
<div class="b" style="left:1000.5px;top:428.5px;width:1px;height:18px;background:#dcdcdc;"></div>
<div class="t" style="left:7px;top:431.08px;font-size:9px;color:#555;letter-spacing:0px;line-height:12px;transform:scaleX(0.86);transform-origin:0 0;">Склад</div>
<div class="t" style="left:114.5px;top:431.08px;font-size:9px;color:#555;letter-spacing:0px;line-height:12px;transform:scaleX(0.86);transform-origin:0 0;">Состояния запаса</div>
<div class="t" style="left:201px;top:431.08px;font-size:9px;color:#555;letter-spacing:0px;line-height:12px;transform:scaleX(0.86);transform-origin:0 0;">Характеристика</div>
<div class="t" style="left:287.8px;top:431.08px;font-size:9px;color:#555;letter-spacing:0px;line-height:12px;transform:scaleX(0.86);transform-origin:0 0;">Доступно</div>
<div class="t" style="left:337.8px;top:431.08px;font-size:9px;color:#555;letter-spacing:0px;line-height:12px;transform:scaleX(0.86);transform-origin:0 0;">В резерве</div>
<div class="t" style="left:387px;top:431.08px;font-size:9px;color:#555;letter-spacing:0px;line-height:12px;transform:scaleX(0.86);transform-origin:0 0;">В резерве + доступно</div>
<div class="t" style="left:479.2px;top:431.08px;font-size:9px;color:#555;letter-spacing:0px;line-height:12px;transform:scaleX(0.86);transform-origin:0 0;">В наличии</div>
<div class="t" style="left:526.7px;top:431.08px;font-size:9px;color:#555;letter-spacing:0px;line-height:12px;transform:scaleX(0.86);transform-origin:0 0;">Отгружается</div>
<div class="t" style="left:584px;top:431.08px;font-size:9px;color:#555;letter-spacing:0px;line-height:12px;transform:scaleX(0.86);transform-origin:0 0;">Заказ на отгрузку</div>
<div class="t" style="left:707.6px;top:431.08px;font-size:9px;color:#555;letter-spacing:0px;line-height:12px;transform:scaleX(0.86);transform-origin:0 0;">К обеспечению</div>
<div class="t" style="left:773.8px;top:431.08px;font-size:9px;color:#555;letter-spacing:0px;line-height:12px;transform:scaleX(0.86);transform-origin:0 0;">Поступит</div>
<div class="t" style="left:817.5px;top:431.08px;font-size:9px;color:#555;letter-spacing:0px;line-height:12px;transform:scaleX(0.86);transform-origin:0 0;">Дата доступности</div>
<div class="t" style="left:894px;top:431.08px;font-size:9px;color:#555;letter-spacing:0px;line-height:12px;transform:scaleX(0.86);transform-origin:0 0;">Заказ на поступление</div>
<div class="b" style="left:1005px;top:428px;width:6px;height:18px;overflow:hidden;"><div class="t" style="left:0.7px;top:3px;font-size:9px;line-height:12px;color:#4d4d4d;letter-spacing:-0.6px">Дата</div></div>
<div class="b" style="left:2px;top:446.4px;width:1010px;height:17.72px;background:#fcefc6;"></div>
<div class="b" style="left:18.2px;top:446.7px;width:62.7px;height:17.119999999999997px;background:#fde18b;"></div>
<div class="b" style="left:2px;top:463.92px;width:1010px;height:1px;background:#ededed;z-index:1;"></div>
<div class="b" style="left:109.5px;top:446.4px;width:1px;height:17.72px;background:#f3ebd0;"></div>
<div class="b" style="left:195.5px;top:446.4px;width:1px;height:17.72px;background:#f3ebd0;"></div>
<div class="b" style="left:282.3px;top:446.4px;width:1px;height:17.72px;background:#f3ebd0;"></div>
<div class="b" style="left:332.3px;top:446.4px;width:1px;height:17.72px;background:#f3ebd0;"></div>
<div class="b" style="left:381.6px;top:446.4px;width:1px;height:17.72px;background:#f3ebd0;"></div>
<div class="b" style="left:474.2px;top:446.4px;width:1px;height:17.72px;background:#f3ebd0;"></div>
<div class="b" style="left:521px;top:446.4px;width:1px;height:17.72px;background:#f3ebd0;"></div>
<div class="b" style="left:578.5px;top:446.4px;width:1px;height:17.72px;background:#f3ebd0;"></div>
<div class="b" style="left:702.5px;top:446.4px;width:1px;height:17.72px;background:#f3ebd0;"></div>
<div class="b" style="left:768.5px;top:446.4px;width:1px;height:17.72px;background:#f3ebd0;"></div>
<div class="b" style="left:812.5px;top:446.4px;width:1px;height:17.72px;background:#f3ebd0;"></div>
<div class="b" style="left:888.6px;top:446.4px;width:1px;height:17.72px;background:#f3ebd0;"></div>
<div class="b" style="left:1000.5px;top:446.4px;width:1px;height:17.72px;background:#f3ebd0;"></div>
<svg style="left:7.5px;top:452.00px" width="8" height="8"><circle cx="3.7" cy="3.7" r="2.7" fill="none" stroke="#bdbdbd" stroke-width="0.8"/><path d="M2.3 3.7 L5.1 3.7" stroke="#a8a8a8" stroke-width="0.8"/></svg>
<div class="t" style="left:20px;top:449.58px;font-size:9px;color:#333;letter-spacing:0px;line-height:12px;transform:scaleX(0.86);transform-origin:0 0;">Склад хранения</div>
<div class="t" style="left:128px;width:200px;text-align:right;top:449.58px;font-size:9px;color:#4d4d4d;letter-spacing:0px;line-height:12px;transform:scaleX(0.86);transform-origin:100% 0;">5,00</div>
<div class="t" style="left:269.5px;width:200px;text-align:right;top:449.58px;font-size:9px;color:#4d4d4d;letter-spacing:0px;line-height:12px;transform:scaleX(0.86);transform-origin:100% 0;">5,00</div>
<div class="t" style="left:317.5px;width:200px;text-align:right;top:449.58px;font-size:9px;color:#4d4d4d;letter-spacing:0px;line-height:12px;transform:scaleX(0.86);transform-origin:100% 0;">3,00</div>
<div class="t" style="left:373px;width:200px;text-align:right;top:449.58px;font-size:9px;color:#4d4d4d;letter-spacing:0px;line-height:12px;transform:scaleX(0.86);transform-origin:100% 0;">3,00</div>
<div class="t" style="left:608px;width:200px;text-align:right;top:449.58px;font-size:9px;color:#4d4d4d;letter-spacing:0px;line-height:12px;transform:scaleX(0.86);transform-origin:100% 0;">5,00</div>
<div class="b" style="left:2px;top:464.12px;width:1010px;height:17.72px;background:#ffffff;"></div>
<div class="b" style="left:2px;top:481.64000000000004px;width:1010px;height:1px;background:#ededed;z-index:1;"></div>
<div class="t" style="left:31px;top:467.30px;font-size:9px;color:#4d4d4d;letter-spacing:0px;line-height:12px;transform:scaleX(0.86);transform-origin:0 0;">Склад хранения</div>
<div class="t" style="left:114.5px;top:467.30px;font-size:9px;color:#4d4d4d;letter-spacing:0px;line-height:12px;transform:scaleX(0.86);transform-origin:0 0;">В наличии, разбло…</div>
<div class="t" style="left:201px;top:467.30px;font-size:9px;color:#4d4d4d;letter-spacing:0px;line-height:12px;transform:scaleX(0.86);transform-origin:0 0;">Без управления</div>
<div class="t" style="left:373px;width:200px;text-align:right;top:467.30px;font-size:9px;color:#4d4d4d;letter-spacing:0px;line-height:12px;transform:scaleX(0.86);transform-origin:100% 0;">3,00</div>
<div class="t" style="left:584px;top:467.30px;font-size:9px;color:#4d4d4d;letter-spacing:0px;line-height:12px;transform:scaleX(0.86);transform-origin:0 0;">Заказ на перемещение ТД0…</div>
<div class="b" style="left:2px;top:481.84px;width:1010px;height:17.72px;background:#f9f9f9;"></div>
<div class="b" style="left:2px;top:499.35999999999996px;width:1010px;height:1px;background:#ededed;z-index:1;"></div>
<div class="t" style="left:31px;top:485.02px;font-size:9px;color:#4d4d4d;letter-spacing:0px;line-height:12px;transform:scaleX(0.86);transform-origin:0 0;">Склад хранения</div>
<div class="t" style="left:114.5px;top:485.02px;font-size:9px;color:#4d4d4d;letter-spacing:0px;line-height:12px;transform:scaleX(0.86);transform-origin:0 0;">В наличии, разбло…</div>
<div class="t" style="left:201px;top:485.02px;font-size:9px;color:#4d4d4d;letter-spacing:0px;line-height:12px;transform:scaleX(0.86);transform-origin:0 0;">Без управления</div>
<div class="t" style="left:317.5px;width:200px;text-align:right;top:485.02px;font-size:9px;color:#4d4d4d;letter-spacing:0px;line-height:12px;transform:scaleX(0.86);transform-origin:100% 0;">3,00</div>
<div class="b" style="left:2px;top:499.55999999999995px;width:1010px;height:17.72px;background:#ffffff;"></div>
<div class="b" style="left:2px;top:517.0799999999999px;width:1010px;height:1px;background:#ededed;z-index:1;"></div>
<div class="t" style="left:31px;top:502.74px;font-size:9px;color:#4d4d4d;letter-spacing:0px;line-height:12px;transform:scaleX(0.86);transform-origin:0 0;">Склад хранения</div>
<div class="t" style="left:114.5px;top:502.74px;font-size:9px;color:#4d4d4d;letter-spacing:0px;line-height:12px;transform:scaleX(0.86);transform-origin:0 0;">Ожидается к пост…</div>
<div class="t" style="left:201px;top:502.74px;font-size:9px;color:#4d4d4d;letter-spacing:0px;line-height:12px;transform:scaleX(0.86);transform-origin:0 0;">Без управления</div>
<div class="t" style="left:128px;width:200px;text-align:right;top:502.74px;font-size:9px;color:#4d4d4d;letter-spacing:0px;line-height:12px;transform:scaleX(0.86);transform-origin:100% 0;">5,00</div>
<div class="t" style="left:269.5px;width:200px;text-align:right;top:502.74px;font-size:9px;color:#4d4d4d;letter-spacing:0px;line-height:12px;transform:scaleX(0.86);transform-origin:100% 0;">5,00</div>
<div class="t" style="left:608px;width:200px;text-align:right;top:502.74px;font-size:9px;color:#4d4d4d;letter-spacing:0px;line-height:12px;transform:scaleX(0.86);transform-origin:100% 0;">5,00</div>
<div class="t" style="left:817.5px;top:502.74px;font-size:9px;color:#4d4d4d;letter-spacing:0px;line-height:12px;transform:scaleX(0.86);transform-origin:0 0;">24.05.2022</div>
<div class="t" style="left:894px;top:502.74px;font-size:9px;color:#4d4d4d;letter-spacing:0px;line-height:12px;transform:scaleX(0.86);transform-origin:0 0;">Приемка товаров на хран…</div>
<div class="b" style="left:2px;top:517.28px;width:1010px;height:16.220000000000027px;background:#f9f9f9;"></div>
<svg style="left:7.5px;top:522.88px" width="8" height="8"><circle cx="3.7" cy="3.7" r="2.7" fill="none" stroke="#bdbdbd" stroke-width="0.8"/><path d="M2.3 3.7 L5.1 3.7" stroke="#a8a8a8" stroke-width="0.8"/></svg>
<div class="t" style="left:20px;top:520.46px;font-size:9px;color:#4d4d4d;letter-spacing:0px;line-height:12px;transform:scaleX(0.86);transform-origin:0 0;">Склад бытовой техники</div>
<div class="t" style="left:128px;width:200px;text-align:right;top:520.46px;font-size:9px;color:#4d4d4d;letter-spacing:0px;line-height:12px;transform:scaleX(0.86);transform-origin:100% 0;">137,00</div>
<div class="t" style="left:178px;width:200px;text-align:right;top:520.46px;font-size:9px;color:#4d4d4d;letter-spacing:0px;line-height:12px;transform:scaleX(0.86);transform-origin:100% 0;">2,00</div>
<div class="t" style="left:269.5px;width:200px;text-align:right;top:520.46px;font-size:9px;color:#4d4d4d;letter-spacing:0px;line-height:12px;transform:scaleX(0.86);transform-origin:100% 0;">139,00</div>
<div class="t" style="left:317.5px;width:200px;text-align:right;top:520.46px;font-size:9px;color:#4d4d4d;letter-spacing:0px;line-height:12px;transform:scaleX(0.86);transform-origin:100% 0;">151,00</div>
<div class="t" style="left:373px;width:200px;text-align:right;top:520.46px;font-size:9px;color:#4d4d4d;letter-spacing:0px;line-height:12px;transform:scaleX(0.86);transform-origin:100% 0;">119,00</div>
<div class="t" style="left:565px;width:200px;text-align:right;top:520.46px;font-size:9px;color:#4d4d4d;letter-spacing:0px;line-height:12px;transform:scaleX(0.86);transform-origin:100% 0;">40,00</div>
<div class="t" style="left:608px;width:200px;text-align:right;top:520.46px;font-size:9px;color:#4d4d4d;letter-spacing:0px;line-height:12px;transform:scaleX(0.86);transform-origin:100% 0;">107,00</div>
<div class="b" style="left:2px;top:532.5px;width:1010px;height:8px;background:#fff;"></div>
<div class="b" style="left:16px;top:534.3px;width:982px;height:4.4px;background:#d3d3d3;border-radius:2.2px;"></div>
<div class="b" style="left:16px;top:534.3px;width:679.7px;height:4.4px;background:#9b9b9b;border-radius:2.2px;"></div>
<svg style="left:5px;top:533px" width="6" height="7"><path d="M4.5 1.5 L1.8 3.5 L4.5 5.5 Z" fill="#c4c4c4"/></svg>
<svg style="left:1002px;top:533px" width="6" height="7"><path d="M1.8 1.6 L4.1 3.5 L1.8 5.4 Z" fill="#666"/></svg>
<div class="b" style="left:1012px;top:428.5px;width:9px;height:104px;background:#fff;"></div>
<div class="b" style="left:1014.7px;top:442px;width:4.4px;height:75.5px;background:#d3d3d3;border-radius:2.2px;"></div>
<div class="b" style="left:1014.5px;top:442px;width:4.8px;height:5px;background:#9b9b9b;border-radius:2.4px;"></div>
<svg style="left:1014px;top:432px" width="7" height="6"><path d="M1.2 4.2 L3.2 1.6 L5.2 4.2 Z" fill="#c4c4c4"/></svg>
<svg style="left:1013.5px;top:522.5px" width="7" height="6"><path d="M1.3 1.5 L5.3 1.5 L3.3 3.9 Z" fill="#666"/></svg>
<div class="b" style="left:1px;top:427.5px;width:1021px;height:114.29999999999995px;box-sizing:border-box;border:1px solid #c8c8c8;border-bottom-color:#b9b9b9;"></div>
</body></html>
